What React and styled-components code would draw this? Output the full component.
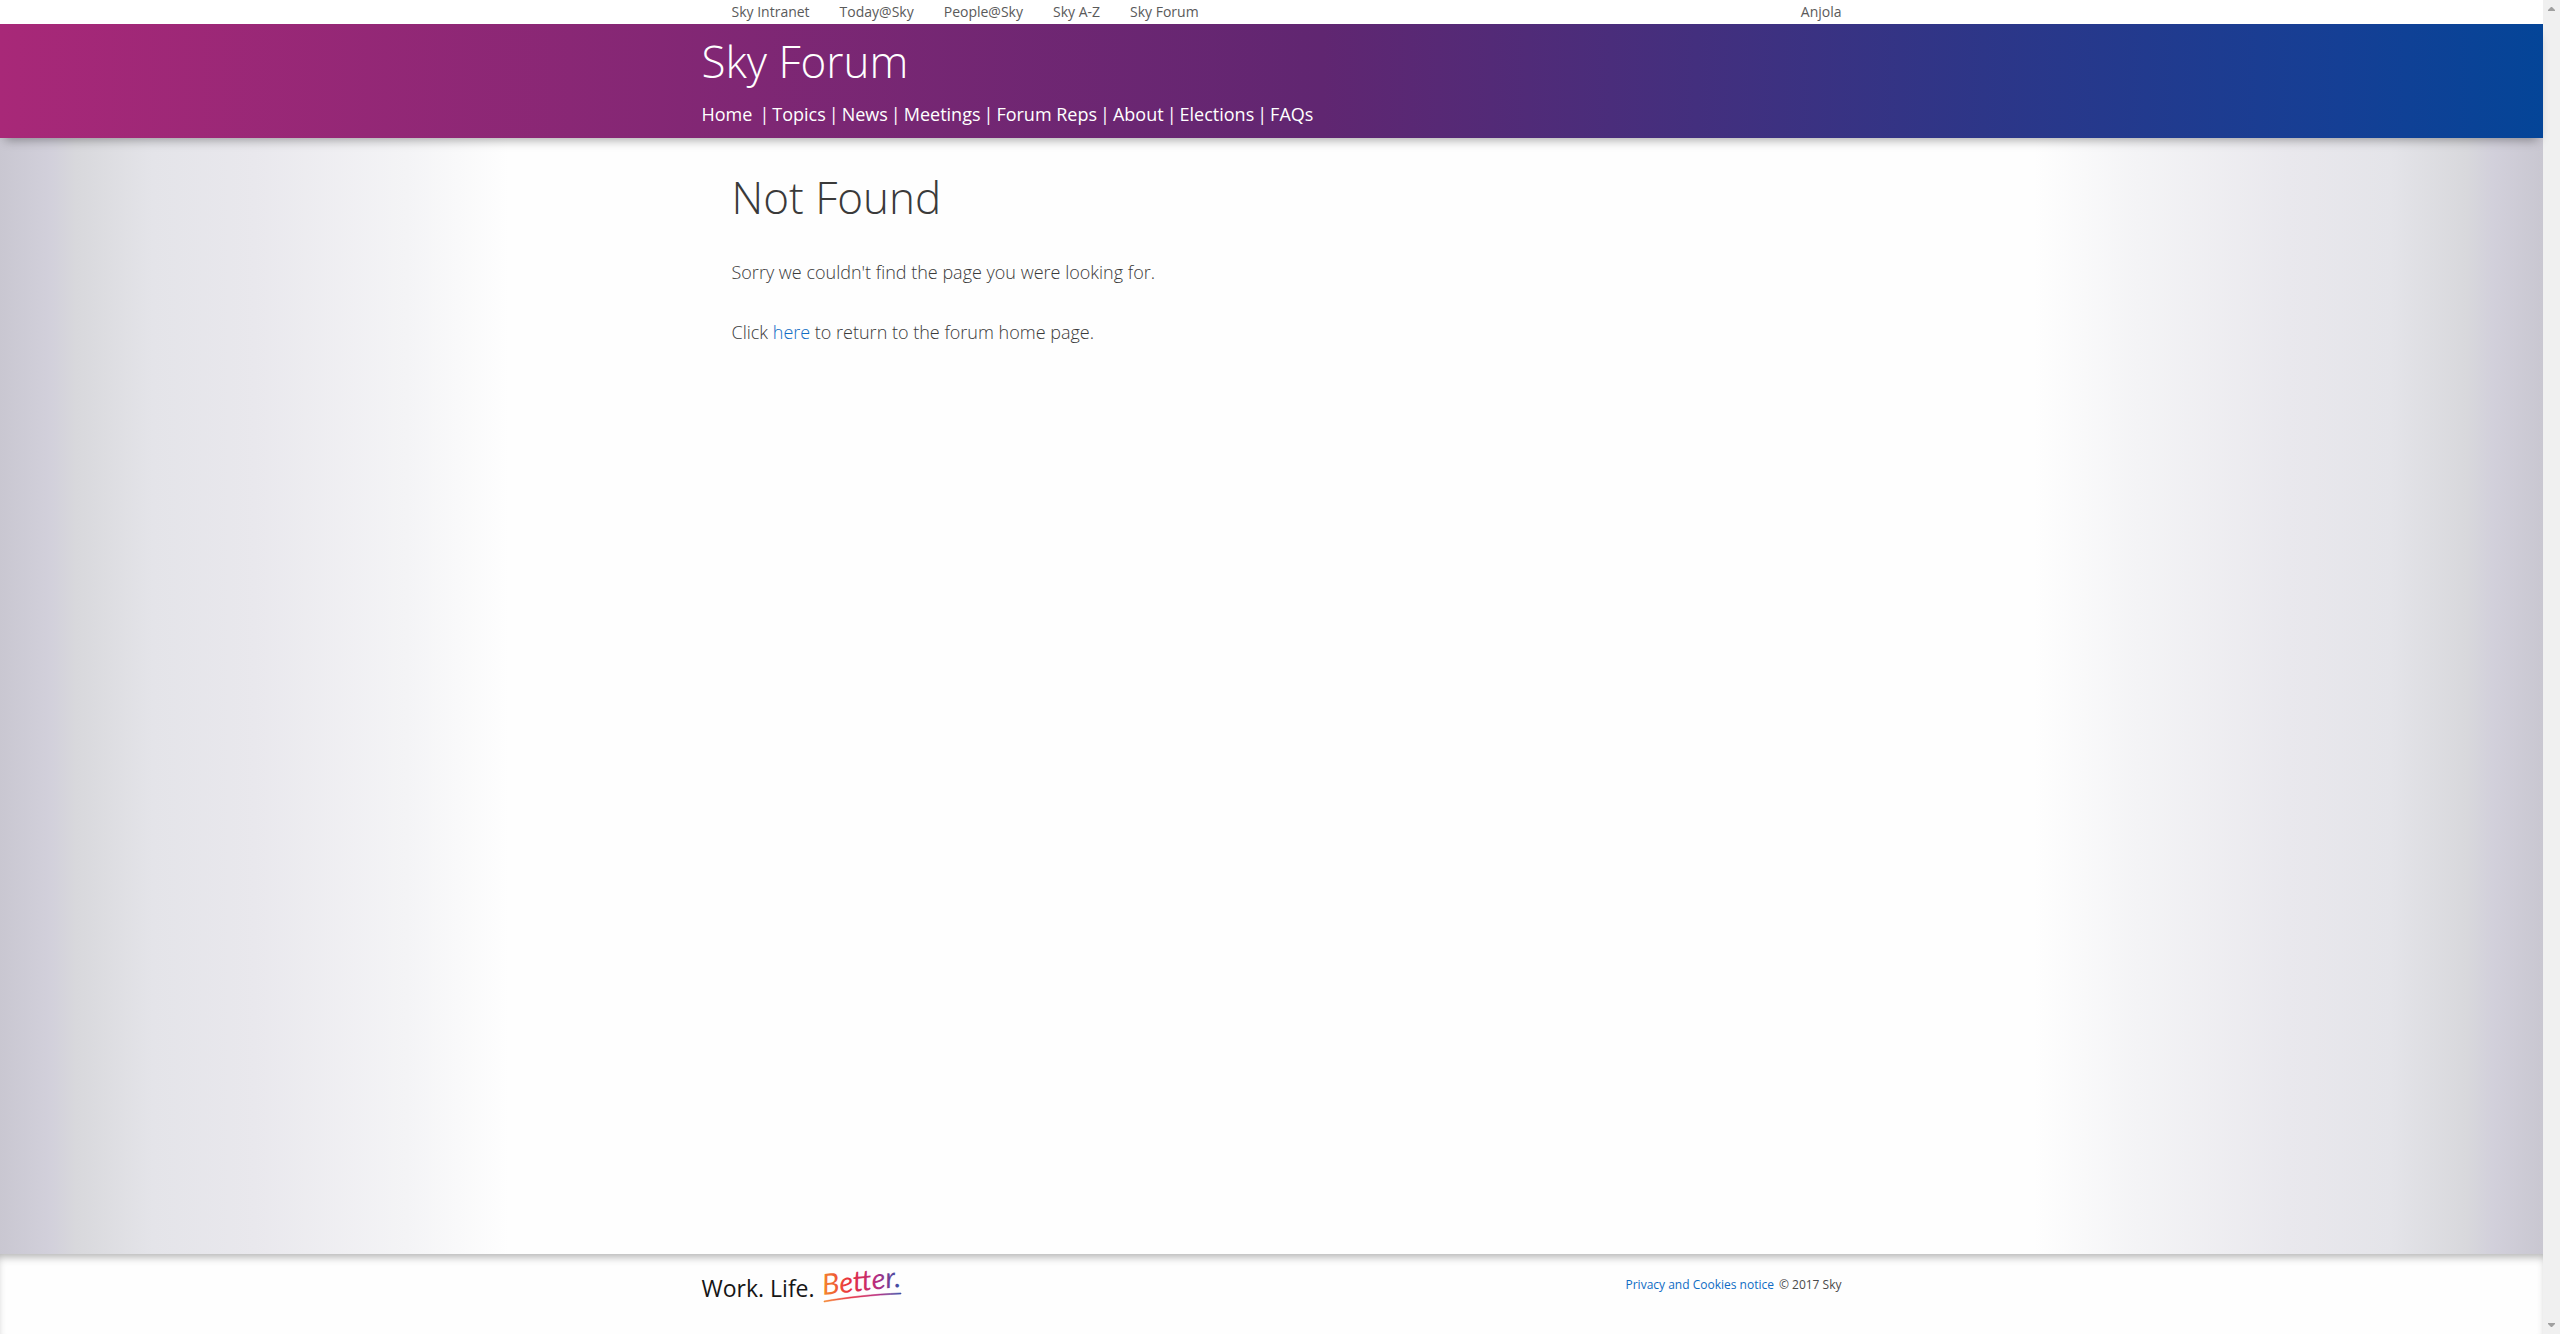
import React from "react";
import styled, { createGlobalStyle } from "styled-components";

const GlobalStyle = createGlobalStyle`
  *, *::before, *::after { box-sizing: border-box; }
  body {
    margin: 0;
    background: #fff;
    color: #3a3a3a;
    font-family: "Open Sans", "Noto Sans", sans-serif;
    font-weight: 300;
  }
  a { color: inherit; text-decoration: none; }
  ul { list-style: none; margin: 0; padding: 0; }
`;

const Shell = styled.div`
  display: flex;
  min-height: 100vh;
`;

const Page = styled.div`
  flex: 1;
  min-width: 0;
  display: flex;
  flex-direction: column;
`;

const Container = styled.div`
  width: 100%;
  max-width: 1140px;
  margin: 0 auto;
`;

const UtilityBar = styled(Container)`
  display: flex;
  justify-content: space-between;
  padding-left: 30px;
  color: #5a5a5a;
  font-size: 14px;
  line-height: 24px;
  font-weight: 400;
`;

const UtilityLinks = styled.ul`
  display: flex;
  gap: 30px;
`;

const Banner = styled.header`
  position: relative;
  padding: 7px 0;
  color: #fff;
  background: linear-gradient(90deg, #a82878 0%, #602671 52%, #2d3688 78%, #153f95 92%, #044598 100%);
  box-shadow: 0 7px 10px -5px rgba(0, 0, 0, 0.35);
`;

const SiteTitle = styled.div`
  font-size: 44px;
  line-height: 60px;
`;

const MainLinks = styled.ul`
  display: flex;
  margin-top: 6px;
  font-size: 18px;
  line-height: 34px;
  font-weight: 400;
`;

const MainLink = styled.li`
  & + &::before {
    content: "|";
    margin: 0 3px;
  }
  &:first-child { margin-right: 4px; }
`;

const Backdrop = styled.main`
  flex: 1;
  background: linear-gradient(
    90deg,
    #c9c7d1 0%, #d2d0db 2%, #d8d8dc 3%, #e4e4e9 6%, #e9e8ed 10%,
    #f4f4f6 16%, #fefefe 20%, #fefefe 80%, #f4f4f6 84%,
    #e9e8ed 90%, #e4e4e9 94%, #d8d8dc 97%, #d2d0db 98%, #c9c7d1 100%
  );
`;

const Content = styled(Container)`
  padding: 29px 30px 30px;
  font-size: 18px;
  line-height: 30px;
`;

const Heading = styled.h1`
  margin: 0 0 30px;
  font-size: 44px;
  line-height: 60px;
  font-weight: inherit;
`;

const Paragraph = styled.p`
  margin: 0 0 30px;
`;

const TextLink = styled.a`
  color: #0f6cc4;
`;

const Footer = styled.footer`
  height: 80px;
  background: #fefefe;
  box-shadow: inset 0 6px 8px -3px rgba(0, 0, 0, 0.3);
`;

const FooterRow = styled(Container)`
  display: flex;
  justify-content: space-between;
  align-items: flex-start;
  padding-top: 12px;
`;

const Brand = styled.div`
  display: flex;
  color: #161616;
  font-size: 23px;
  line-height: 44px;
  font-weight: 400;
  gap: 8px;
`;

const BrandMark = styled.svg`
  display: block;
  width: 80px;
  height: 38px;
  overflow: visible;
`;

const Legal = styled.div`
  display: flex;
  gap: 5px;
  color: #4a4a4a;
  font-size: 12px;
  line-height: 38px;
  font-weight: 400;
`;

const Scrollbar = styled.div`
  width: 17px;
  display: flex;
  flex-direction: column;
  justify-content: space-between;
  align-items: center;
  padding: 7px 0;
  background: #f0f0f0;
`;

const Arrow = styled.svg`
  display: block;
  width: 7px;
  height: 4px;
  fill: #a0a0a0;
`;

const utility = ["Sky Intranet", "Today@Sky", "People@Sky", "Sky A-Z", "Sky Forum"];
const sections = ["Home", "Topics", "News", "Meetings", "Forum Reps", "About", "Elections", "FAQs"];

export default function App() {
  return (
    <Shell>
      <GlobalStyle />
      <Page>
        <UtilityBar as="nav">
          <UtilityLinks>
            {utility.map((label) => (
              <li key={label}><a href="#">{label}</a></li>
            ))}
          </UtilityLinks>
          <a href="#">Anjola</a>
        </UtilityBar>
        <Banner>
          <Container>
            <SiteTitle>Sky Forum</SiteTitle>
            <nav>
              <MainLinks>
                {sections.map((label) => (
                  <MainLink key={label}><a href="#">{label}</a></MainLink>
                ))}
              </MainLinks>
            </nav>
          </Container>
        </Banner>
        <Backdrop>
          <Content>
            <Heading>Not Found</Heading>
            <Paragraph>Sorry we couldn't find the page you were looking for.</Paragraph>
            <Paragraph>
              Click <TextLink href="#">here</TextLink> to return to the forum home page.
            </Paragraph>
          </Content>
        </Backdrop>
        <Footer>
          <FooterRow>
            <Brand>
              <span>Work. Life.</span>
              <BrandMark viewBox="0 0 80 38">
                <defs>
                  <linearGradient id="ink" gradientUnits="userSpaceOnUse" x1="0" y1="0" x2="78" y2="0">
                    <stop offset="0" stopColor="#f58a2c" />
                    <stop offset="0.35" stopColor="#e8303f" />
                    <stop offset="0.7" stopColor="#b82c80" />
                    <stop offset="1" stopColor="#3550a8" />
                  </linearGradient>
                </defs>
                <text x="0" y="29" transform="rotate(-6 0 29)" fill="url(#ink)" fontFamily="Lato, sans-serif" fontStyle="italic" fontWeight="400" fontSize="29">Better.</text>
                <path d="M1 35 C24 31 50 28 78 27 L78 28 C50 29 24 32 1 36 Z" fill="url(#ink)" stroke="url(#ink)" strokeWidth="0.6" />
              </BrandMark>
            </Brand>
            <Legal>
              <TextLink href="#">Privacy and Cookies notice</TextLink>
              <span>© 2017 Sky</span>
            </Legal>
          </FooterRow>
        </Footer>
      </Page>
      <Scrollbar aria-hidden="true">
        <Arrow viewBox="0 0 7 4"><path d="M0 4V3L3 0h1l3 3v1z" /></Arrow>
        <Arrow viewBox="0 0 7 4"><path d="M0 0v1l3 3h1l3-3V0z" /></Arrow>
      </Scrollbar>
    </Shell>
  );
}
